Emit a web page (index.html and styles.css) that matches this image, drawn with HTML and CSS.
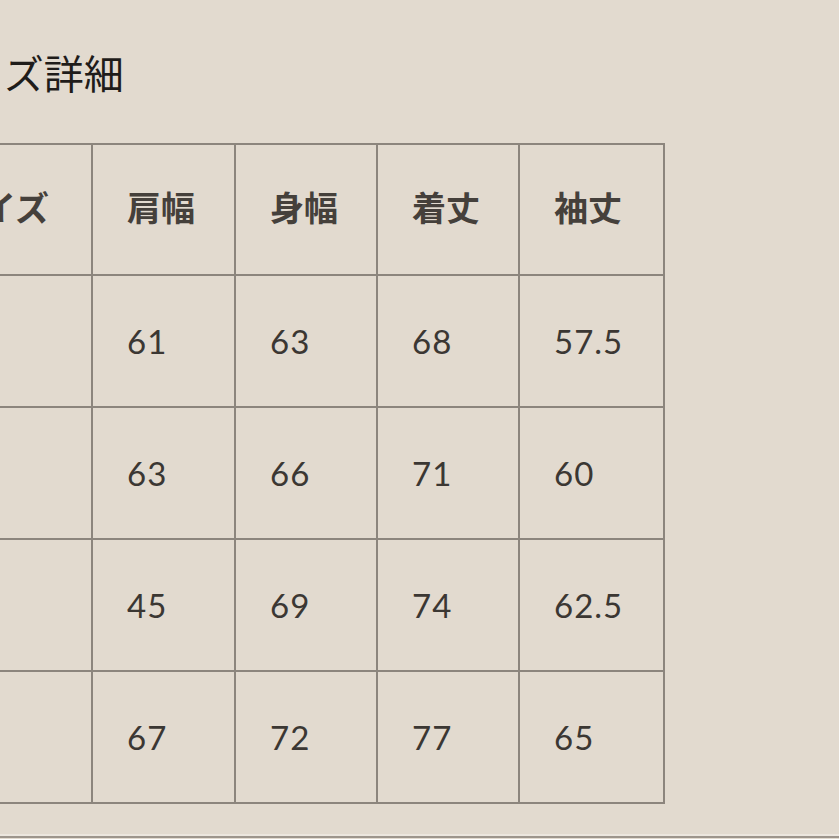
FILE: index.html
```html
<!DOCTYPE html>
<html lang="ja">
<head>
<meta charset="utf-8">
<link rel="stylesheet" href="styles.css">
</head>
<body>
<div class="page">
  <h1 class="title">サイズ詳細</h1>
  <table class="size-table">
    <colgroup>
      <col class="c-size">
      <col class="c-a">
      <col class="c-b">
      <col class="c-c">
      <col class="c-d">
    </colgroup>
    <thead>
      <tr>
        <th>サイズ</th>
        <th>肩幅</th>
        <th>身幅</th>
        <th>着丈</th>
        <th>袖丈</th>
      </tr>
    </thead>
    <tbody>
      <tr><td></td><td>61</td><td>63</td><td>68</td><td>57.5</td></tr>
      <tr><td></td><td>63</td><td>66</td><td>71</td><td>60</td></tr>
      <tr><td></td><td>45</td><td>69</td><td>74</td><td>62.5</td></tr>
      <tr><td></td><td>67</td><td>72</td><td>77</td><td>65</td></tr>
    </tbody>
  </table>
  <div class="bottom-rule"></div>
</div>
</body>
</html>
```
FILE: styles.css
```css
html, body {
  margin: 0;
  padding: 0;
  background: #e2dacf;
  overflow: hidden;
}
.page {
  width: 839px;
  height: 839px;
  overflow: hidden;
}
.title {
  margin: 43px 0 0 -75px;
  font-family: "Noto Sans CJK JP", sans-serif;
  font-weight: 400;
  font-size: 40px;
  line-height: 58px;
  color: #1f1c1a;
  white-space: nowrap;
}
.size-table {
  margin: 42px 0 0 -88px;
  border-collapse: collapse;
  table-layout: fixed;
  width: 751px;
}
.c-size { width: 179px; }
.c-a { width: 143px; }
.c-b { width: 142px; }
.c-c { width: 142px; }
.c-d { width: 145px; }
.size-table th,
.size-table td {
  border: 2px solid #8c857d;
  height: 132px;
  padding: 0 0 0 34px;
  box-sizing: border-box;
  text-align: left;
  vertical-align: middle;
  color: #3b3733;
  white-space: nowrap;
}
.size-table th {
  height: 131px;
  padding-bottom: 6px;
  font-family: "Noto Sans CJK JP", sans-serif;
  font-weight: 700;
  font-size: 34px;
  color: #45403b;
}
.size-table td {
  font-family: Lato, "Noto Sans", sans-serif;
  font-weight: 400;
  font-size: 33px;
  letter-spacing: 1px;
}
.bottom-rule {
  margin-top: 30px;
  height: 2px;
  background: #9d958c;
  border-top: 2px solid #ece6de;
}
```
